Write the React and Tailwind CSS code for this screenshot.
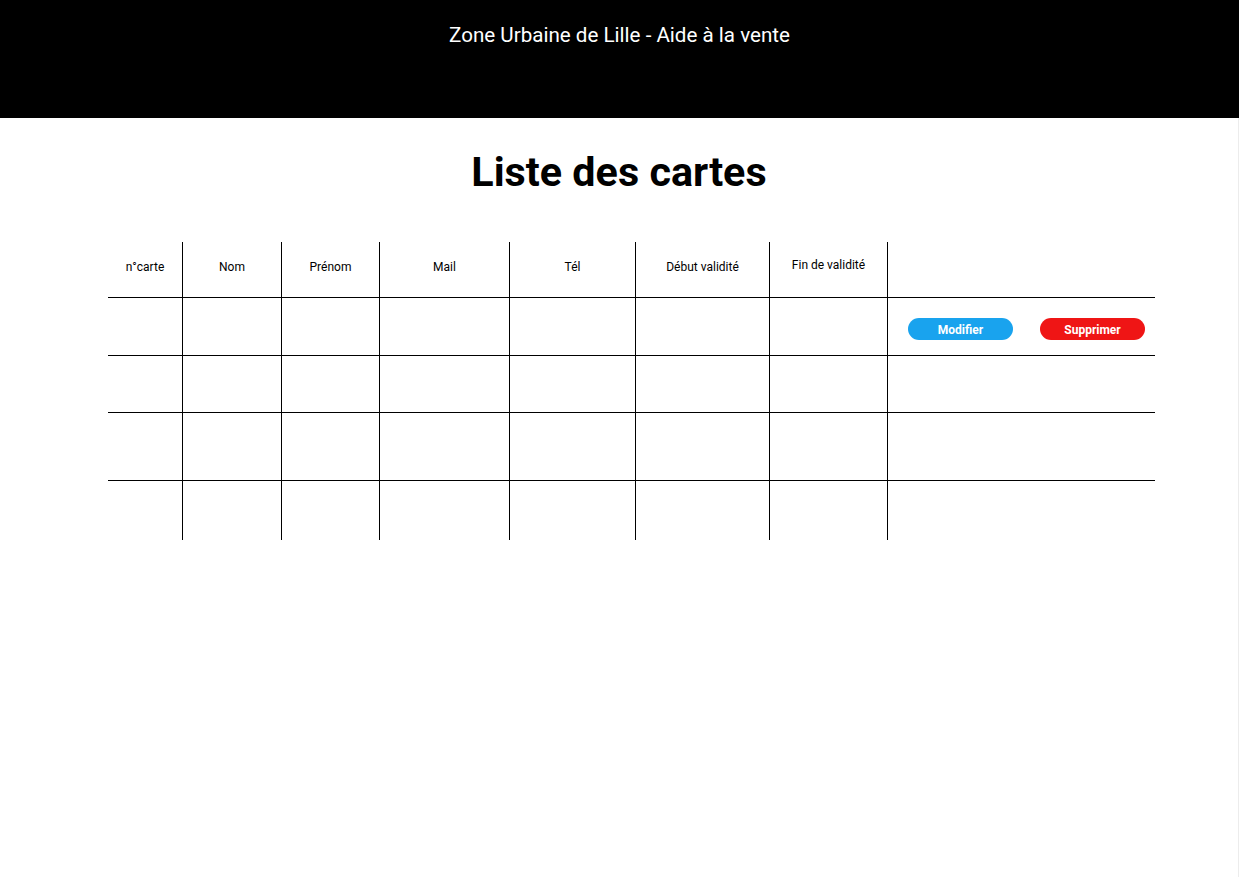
import React from "react";

const columns = [
  { label: "n°carte", width: "w-[74px]" },
  { label: "Nom", width: "w-[99px]" },
  { label: "Prénom", width: "w-[98px]" },
  { label: "Mail", width: "w-[130px]" },
  { label: "Tél", width: "w-[126px]" },
  { label: "Début validité", width: "w-[134px]" },
  { label: "Fin de validité", width: "w-[118px]", raise: true },
  { label: "", width: "w-[268px]" },
];

const rowHeights = ["h-[58px]", "h-[57px]", "h-[68px]", "h-[60px]"];

const App = () => {
  return (
    <div className="min-h-[877px] bg-white font-['Roboto',sans-serif] text-black">
      <header className="h-[118px] bg-black pt-[22px] text-center">
        <h1 className="text-[20.6px] leading-[26px] text-white">
          Zone Urbaine de Lille - Aide à la vente
        </h1>
      </header>

      <main className="min-h-[759px] border-r border-[#ececec] pt-[32px]">
        <h2 className="text-center text-[41.3px] font-bold leading-[44px]">
          Liste des cartes
        </h2>

        <div className="ml-[108px] mt-[48px] w-[1047px]">
          <div className="flex h-[55px]">
            {columns.map((col, i) => (
              <div
                key={i}
                className={`${col.width} ${i > 0 ? "border-l border-black" : ""} flex justify-center text-[12px] ${
                  col.raise ? "pt-[14px]" : "pt-[16px]"
                }`}
              >
                {col.label}
              </div>
            ))}
          </div>

          {rowHeights.map((h, r) => (
            <div key={r} className={`flex ${h} border-t border-black`}>
              {columns.map((col, i) => (
                <div
                  key={i}
                  className={`${col.width} ${i > 0 ? "border-l border-black" : ""}`}
                >
                  {r === 0 && i === columns.length - 1 && (
                    <div className="flex gap-[27px] pl-[20px] pt-[20px]">
                      <button className="h-[22px] w-[105px] rounded-full bg-[#19a3ee] pt-[2px] text-[12px] font-bold text-white">
                        Modifier
                      </button>
                      <button className="h-[22px] w-[105px] rounded-full bg-[#ef1515] pt-[2px] text-[12px] font-bold text-white">
                        Supprimer
                      </button>
                    </div>
                  )}
                </div>
              ))}
            </div>
          ))}
        </div>
      </main>
    </div>
  );
};

export default App;
